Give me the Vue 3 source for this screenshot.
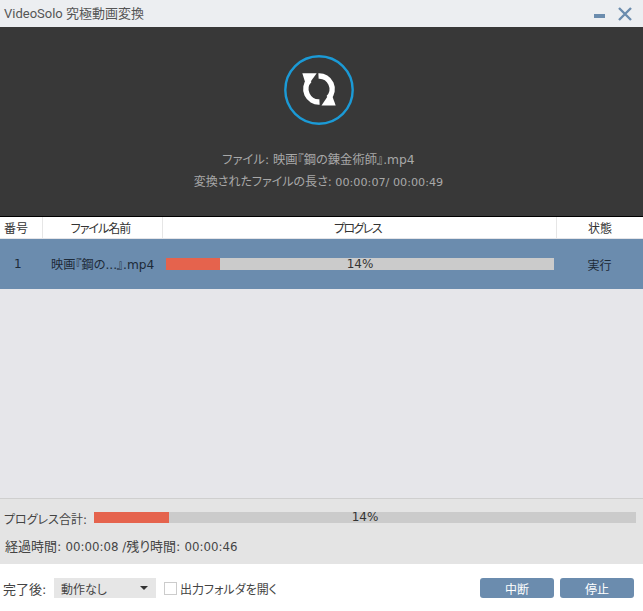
<script setup>
const columns = [
  { label: '番号', cls: 'c-no' },
  { label: 'ファイル名前', cls: 'c-name' },
  { label: 'プログレス', cls: 'c-prog' },
  { label: '状態', cls: 'c-state' },
]
</script>

<template>
  <div class="app">
    <header class="title">
      <span class="title-text">VideoSolo 究極動画変換</span>
      <div class="win">
        <svg width="14" height="14" viewBox="0 0 14 14"><rect x="1" y="7" width="11" height="4" fill="#6b8cae"/></svg>
        <svg width="14" height="14" viewBox="0 0 14 14"><path d="M1 1 13 13M13 1 1 13" stroke="#6b8cae" stroke-width="2.4" fill="none"/></svg>
      </div>
    </header>

    <section class="hero">
      <svg class="spin" width="70" height="70" viewBox="0 0 70 70">
        <circle cx="35" cy="35" r="33.7" fill="none" stroke="#1b9ad6" stroke-width="2.4"/>
        <g fill="none" stroke="#fff" stroke-width="5.5">
          <path d="M25.5 25 A13 13 0 0 0 35.5 47"/>
          <path d="M34.5 21 A13 13 0 0 1 44.5 43"/>
        </g>
        <path d="M18.3 18.3 L32.7 18.3 L22.7 32 Z" fill="#fff"/>
        <path d="M51.7 50.5 L37.5 50.5 L46.7 36.7 Z" fill="#fff"/>
      </svg>
      <p class="file">ファイル: 映画『鋼の錬金術師』.mp4</p>
      <p class="len">変換されたファイルの長さ:<span class="num"> 00:00:07/ 00:00:49</span></p>
    </section>

    <div class="thead">
      <div v-for="c in columns" :key="c.label" class="th" :class="c.cls">{{ c.label }}</div>
    </div>

    <div class="list">
      <div class="row">
        <div class="c-no cell">1</div>
        <div class="c-name cell">映画『鋼の...』.mp4</div>
        <div class="c-prog cell">
          <div class="bar row-bar">
            <div class="fill" style="width: 14%"></div>
            <span class="pct">14%</span>
          </div>
        </div>
        <div class="c-state cell state">実行</div>
      </div>
    </div>

    <section class="summary">
      <div class="sum-line">
        <span class="sum-label">プログレス合計:</span>
        <div class="bar sum-bar">
          <div class="fill" style="width: 13.9%"></div>
          <span class="pct">14%</span>
        </div>
      </div>
      <div class="times">経過時間: <span class="num">00:00:08 /</span>残り時間: <span class="num">00:00:46</span></div>
    </section>

    <footer class="foot">
      <span class="after">完了後:</span>
      <div class="select">
        <span>動作なし</span>
        <i class="caret"></i>
      </div>
      <span class="check"></span>
      <span class="open">出力フォルダを開く</span>
      <button class="btn first">中断</button>
      <button class="btn">停止</button>
    </footer>
  </div>
</template>

<style>
html, body { margin: 0; background: #fff; }
</style>

<style scoped>
.app {
  width: 643px;
  height: 611px;
  display: flex;
  flex-direction: column;
  overflow: hidden;
  font-family: "DejaVu Sans", "Noto Sans CJK JP", sans-serif;
  font-feature-settings: "palt";
  font-size: 12px;
  color: #444;
  background: #fff;
}
.title {
  height: 27px;
  flex: none;
  display: flex;
  align-items: center;
  justify-content: space-between;
  padding: 0 11px 0 4px;
  background: #eceef1;
  box-sizing: border-box;
}
.title-text { font-family: Roboto, "Noto Sans CJK JP", sans-serif; font-size: 13px; color: #555; position: relative; top: -1px; }
.win { display: flex; gap: 11px; align-items: center; }
.hero {
  height: 190px;
  flex: none;
  background: #383838;
  color: #a8a8a8;
  display: flex;
  flex-direction: column;
  align-items: center;
  box-sizing: border-box;
  padding: 28px 6px 0 0;
  border-bottom: 1px solid #000;
}
.spin { display: block; }
.file, .len { margin: 0; line-height: 20px; }
.file { margin-top: 25px; font-size: 12.3px; }
.len { margin-top: 2px; font-size: 12px; }
.len .num { font-size: 11.2px; }
.num { font-size: 11.8px; }
.thead {
  height: 22px;
  flex: none;
  display: flex;
  background: #fff;
  color: #333;
  border-bottom: 1px solid #e4e4e8;
  box-sizing: border-box;
}
.th {
  display: flex;
  align-items: center;
  justify-content: center;
  font-size: 12px;
  border-right: 1px solid #e6e6e6;
  box-sizing: border-box;
}
.th:last-child { border-right: 0; }
.th.c-no { padding-right: 10px; }
.th.c-name { padding-right: 4px; letter-spacing: -1px; }
.th.c-prog { padding-right: 4px; letter-spacing: -1.6px; }
.c-no { width: 43px; flex: none; }
.c-name { width: 120px; flex: none; }
.c-prog { width: 394px; flex: none; }
.c-state { width: 86px; flex: none; }
.list { flex: 1; background: #e6e6ea; }
.row {
  height: 50px;
  display: flex;
  background: #6b8cae;
  color: #1d2a38;
}
.cell { display: flex; align-items: center; box-sizing: border-box; font-size: 12px; }
.row .c-no { padding-left: 14px; }
.row .c-name { padding-left: 8px; white-space: nowrap; font-size: 12.2px; }
.row .c-prog { padding-left: 3px; }
.state { justify-content: center; padding-right: 1px; }
.bar { position: relative; background: #cbcbcb; }
.fill { position: absolute; left: 0; top: 0; bottom: 0; background: #e5634d; }
.pct {
  position: absolute;
  inset: 0;
  display: flex;
  align-items: center;
  justify-content: center;
  font-size: 12px;
  color: #333;
}
.row-bar { width: 388px; height: 12px; }
.summary {
  height: 66px;
  flex: none;
  background: #e4e4e4;
  border-top: 1px solid #cfcfcf;
  box-sizing: border-box;
  padding-top: 12px;
}
.sum-line { display: flex; align-items: center; height: 12px; position: relative; }
.sum-label { width: 94px; padding-left: 4px; box-sizing: border-box; flex: none; font-size: 12px; white-space: nowrap; position: relative; top: 1px; }
.sum-bar { width: 542px; height: 11px; }
.times { margin-top: 16px; padding-left: 5px; font-size: 13px; line-height: 16px; }
.foot {
  height: 47px;
  flex: none;
  display: flex;
  align-items: center;
  background: #fff;
  box-sizing: border-box;
  padding-top: 1px;
}
.after { margin-left: 3px; width: 51px; flex: none; white-space: nowrap; font-size: 13px; }
.select {
  width: 102px;
  height: 20px;
  flex: none;
  display: flex;
  align-items: center;
  justify-content: space-between;
  box-sizing: border-box;
  padding: 0 8px 0 7px;
  background: #e6e6e6;
}
.caret {
  width: 0;
  height: 0;
  border-left: 4px solid transparent;
  border-right: 4px solid transparent;
  border-top: 4px solid #333;
}
.check {
  width: 11px;
  height: 11px;
  flex: none;
  margin-left: 8px;
  border: 1px solid #ccc;
  background: #fff;
}
.open { margin-left: 3px; white-space: nowrap; flex: 1; }
.btn {
  width: 74px;
  height: 20px;
  padding: 0;
  border: 0;
  border-radius: 3px;
  background: #6b8cae;
  color: #fff;
  font: inherit;
  margin-right: 9px;
}
.btn.first { margin-right: 6px; }
</style>
